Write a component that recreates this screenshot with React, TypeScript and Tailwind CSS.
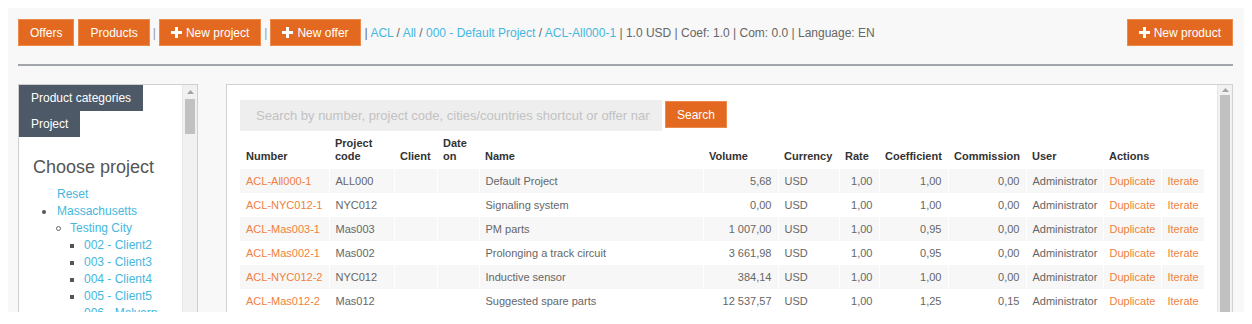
import React from "react";

function Plus() {
  return (
    <svg width="11" height="11" viewBox="0 0 11 11" className="shrink-0">
      <rect x="4" y="0" width="3" height="11" fill="white" />
      <rect x="0" y="4" width="11" height="3" fill="white" />
    </svg>
  );
}

function Btn({ children, icon }: { children: React.ReactNode; icon?: boolean }) {
  return (
    <button className="h-[27px] px-[11px] bg-[#e2691f] border border-[#ec8a4e] text-white text-[12px] leading-none flex items-center gap-[4px] whitespace-nowrap">
      {icon && <Plus />}
      {children}
    </button>
  );
}

function Scrollbar({ thumb }: { thumb: "short" | "long" }) {
  return (
    <div className="w-[15px] shrink-0 bg-[#f1f1f1] border-l border-[#e6e6e6] flex flex-col items-center">
      <div className="h-[14px] w-full flex items-center justify-center">
        <svg width="7" height="4" viewBox="0 0 7 4">
          <path d="M0 4 L3.5 0 L7 4 Z" fill="#a3a3a3" />
        </svg>
      </div>
      <div className={thumb === "short" ? "w-[10px] h-[35px] bg-[#c1c1c1]" : "w-[10px] h-[400px] bg-[#c1c1c1]"} />
    </div>
  );
}

const rows = [
  ["ACL-All000-1", "ALL000", "Default Project", "5,68", "1,00", "1,00", "0,00"],
  ["ACL-NYC012-1", "NYC012", "Signaling system", "0,00", "1,00", "1,00", "0,00"],
  ["ACL-Mas003-1", "Mas003", "PM parts", "1 007,00", "1,00", "0,95", "0,00"],
  ["ACL-Mas002-1", "Mas002", "Prolonging a track circuit", "3 661,98", "1,00", "0,95", "0,00"],
  ["ACL-NYC012-2", "NYC012", "Inductive sensor", "384,14", "1,00", "1,00", "0,00"],
  ["ACL-Mas012-2", "Mas012", "Suggested spare parts", "12 537,57", "1,00", "1,25", "0,15"],
];

const colWidths = [89, 65, 43, 42, 224, 75, 61, 40, 69, 78, 77, 58, 43];

const th = "text-left align-bottom font-bold text-[#333] px-[6px] pt-[5px] pb-[6px] leading-[13px] whitespace-nowrap";
const td = "px-[6px] py-[5px] leading-[14px] whitespace-nowrap border-l border-white";
const link = "text-[#45b7de]";

export default function App() {
  return (
    <div className="p-2 bg-white font-['Liberation_Sans',Arial,sans-serif]">
      <div className="h-[304px] overflow-hidden bg-[#f8f8f8] pl-[10px] pr-[11px] pt-[11px]">
        {/* Top bar */}
        <div className="flex items-center justify-between h-[27px]">
          <div className="flex items-center">
            <Btn>Offers</Btn>
            <div className="ml-[4px]">
              <Btn>Products</Btn>
            </div>
            <span className="px-[3px] text-[12px] text-[#999]">|</span>
            <Btn icon>New project</Btn>
            <span className="px-[3px] text-[12px] text-[#999]">|</span>
            <Btn icon>New offer</Btn>
            <span className="ml-[4px] text-[12px] text-[#666] whitespace-nowrap">
              | <a className={link}>ACL</a> / <a className={link}>All</a> / <a className={link}>000 - Default Project</a> / <a className={link}>ACL-All000-1</a> | 1.0 USD | Coef: 1.0 | Com: 0.0 | Language: EN
            </span>
          </div>
          <Btn icon>New product</Btn>
        </div>

        {/* Divider */}
        <div className="mt-[18px] h-[2px] bg-[#a2a5a9]" />

        {/* Panels */}
        <div className="mt-[18px] flex gap-[28px] items-start">
          {/* Left panel */}
          <div className="w-[180px] h-[300px] shrink-0 bg-white border border-[#cfcfcf] flex">
            <div className="flex-1 min-w-0 flex flex-col">
              <div className="flex flex-col items-start">
                <div className="h-[26px] leading-[26px] px-[12px] bg-[#4d5967] text-white text-[12px] whitespace-nowrap">Product categories</div>
                <div className="h-[26px] leading-[26px] px-[12px] bg-[#4d5967] text-white text-[12px]">Project</div>
              </div>
              <div className="mt-[20px] pl-[14px] text-[18px] leading-[20px] text-[#555] whitespace-nowrap">Choose project</div>
              <div className="mt-[9px] text-[12px] leading-[17px] whitespace-nowrap">
                <div className="pl-[38px]"><a className={link}>Reset</a></div>
                <div className="pl-[23px] flex items-center">
                  <span className="w-[4px] h-[4px] rounded-full bg-[#555] mr-[11px]" />
                  <a className={link}>Massachusetts</a>
                </div>
                <div className="pl-[37px] flex items-center">
                  <span className="w-[5px] h-[5px] rounded-full border border-[#666] mr-[9px]" />
                  <a className={link}>Testing City</a>
                </div>
                {["002 - Client2", "003 - Client3", "004 - Client4", "005 - Client5", "006 - Malvern"].map((c) => (
                  <div key={c} className="pl-[51px] flex items-center">
                    <span className="w-[4px] h-[4px] bg-[#555] mr-[10px]" />
                    <a className={link}>{c}</a>
                  </div>
                ))}
              </div>
            </div>
            <Scrollbar thumb="short" />
          </div>

          {/* Right panel */}
          <div className="flex-1 min-w-0 h-[300px] bg-white border border-[#d2d2d2] flex">
            <div className="flex-1 min-w-0 pl-[13px] pt-[15px]">
              <div className="flex items-start">
                <input
                  className="w-[422px] h-[31px] bg-[#eeeeee] pl-[16px] pr-[12px] text-[13px] text-[#555] placeholder:text-[#c2c2c2] outline-none"
                  placeholder="Search by number, project code, cities/countries shortcut or offer name"
                />
                <button className="ml-[3px] mt-[1px] h-[27px] px-[11px] bg-[#e2691f] border border-[#ec8a4e] text-white text-[12px] leading-none">Search</button>
              </div>
              <table className="mt-[1px] table-fixed border-collapse w-[964px] text-[11px]">
                <colgroup>
                  {colWidths.map((w, i) => (
                    <col key={i} style={{ width: w }} />
                  ))}
                </colgroup>
                <thead>
                  <tr>
                    <th className={th}>Number</th>
                    <th className={th}>Project<br />code</th>
                    <th className={th}>Client</th>
                    <th className={th}>Date<br />on</th>
                    <th className={th}>Name</th>
                    <th className={th}>Volume</th>
                    <th className={th}>Currency</th>
                    <th className={th}>Rate</th>
                    <th className={th}>Coefficient</th>
                    <th className={th}>Commission</th>
                    <th className={th}>User</th>
                    <th className={th} colSpan={2}>Actions</th>
                  </tr>
                </thead>
                <tbody className="text-[#666]">
                  {rows.map((r, i) => (
                    <tr key={i} className={i % 2 === 0 ? "bg-[#f7f7f7]" : "bg-white"}>
                      <td className={td + " border-l-0 text-[#ef7f3c]"}>{r[0]}</td>
                      <td className={td}>{r[1]}</td>
                      <td className={td}></td>
                      <td className={td}></td>
                      <td className={td}>{r[2]}</td>
                      <td className={td + " text-right"}>{r[3]}</td>
                      <td className={td}>USD</td>
                      <td className={td + " text-right"}>{r[4]}</td>
                      <td className={td + " text-right"}>{r[5]}</td>
                      <td className={td + " text-right"}>{r[6]}</td>
                      <td className={td}>Administrator</td>
                      <td className={td + " text-[#ef7f3c]"}>Duplicate</td>
                      <td className={td + " text-[#ef7f3c]"}>Iterate</td>
                    </tr>
                  ))}
                </tbody>
              </table>
            </div>
            <Scrollbar thumb="long" />
          </div>
        </div>
      </div>
    </div>
  );
}
